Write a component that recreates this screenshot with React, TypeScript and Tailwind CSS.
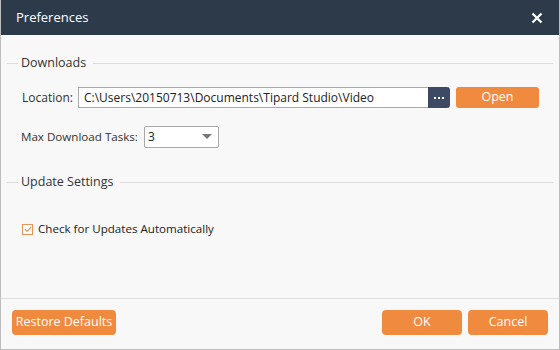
import React from "react";

function Section({ title }: { title: string }) {
  return (
    <div className="flex items-center h-[16px] pl-[6px] pr-[6px]">
      <div className="w-[11px] h-px bg-[#dcdcdc]" />
      <span className="ml-[3px] mr-[7px] text-[12.5px] text-[#333] leading-[16px]">{title}</span>
      <div className="flex-1 h-px bg-[#dcdcdc]" />
    </div>
  );
}

export default function App() {
  return (
    <div
      className="w-[560px] h-[350px] flex flex-col bg-[#f8f8f8] border-x border-b border-[#bdbdbd]"
      style={{ fontFamily: '"Open Sans", "Liberation Sans", Arial, sans-serif' }}
    >
      <div className="h-[35px] bg-[#2c3a4a] flex items-center justify-between pl-[15px] pr-[16px] shrink-0">
        <span className="text-white text-[13px]">Preferences</span>
        <svg width="12" height="12" viewBox="0 0 12 12">
          <path d="M1.5 1.5 L10.5 10.5 M10.5 1.5 L1.5 10.5" stroke="#fff" strokeWidth="2.2" />
        </svg>
      </div>
      <div className="flex-1 flex flex-col">
        <div className="mt-[20px]">
          <Section title="Downloads" />
        </div>
        <div className="mt-[16px] flex items-center h-[21px] pl-[21px]">
          <span className="text-[12px] text-[#333] w-[56px]">Location:</span>
          <div className="w-[350px] h-[21px] bg-white border border-[#a9a9a9] border-r-0 flex items-center pl-[5px] text-[12px] text-[#222]">
            C:\Users\20150713\Documents\Tipard Studio\Video
          </div>
          <div className="w-[22px] h-[21px] bg-[#3e4a63] rounded-r-[3px] flex items-center justify-center gap-[2px]">
            <div className="w-[2px] h-[2px] bg-white" />
            <div className="w-[2px] h-[2px] bg-white" />
            <div className="w-[2px] h-[2px] bg-white" />
          </div>
          <div className="ml-[6px] w-[83px] h-[21px] bg-[#f08a3e] rounded-[3px] flex items-center justify-center text-white text-[12.5px]">
            Open
          </div>
        </div>
        <div className="mt-[18px] flex items-center h-[22px] pl-[20px]">
          <span className="text-[11.6px] text-[#333] w-[123px]">Max Download Tasks:</span>
          <div className="w-[75px] h-[22px] bg-white border border-[#a9a9a9] rounded-[2px] flex items-center justify-between pl-[3px] pr-[6px] text-[12px] text-[#222]">
            <span>3</span>
            <svg width="10" height="6" viewBox="0 0 10 6">
              <path d="M0 0 L10 0 L5 5 Z" fill="#777" />
            </svg>
          </div>
        </div>
        <div className="mt-[26px]">
          <Section title="Update Settings" />
        </div>
        <div className="mt-[32px] flex items-center pl-[21px] h-[14px]">
          <div className="w-[11px] h-[11px] border border-[#e8935a] bg-white flex items-center justify-center">
            <svg width="8" height="7" viewBox="0 0 8 7">
              <path d="M0.8 3.2 L3 5.5 L7.2 1" stroke="#e8935a" strokeWidth="1.1" fill="none" />
            </svg>
          </div>
          <span className="ml-[5px] text-[11.6px] text-[#222]">Check for Updates Automatically</span>
        </div>
      </div>
      <div className="h-[51px] border-t border-[#dedede] flex items-start pt-[11px] px-[11px] shrink-0">
        <div className="w-[104px] h-[25px] bg-[#f08a3e] rounded-[4px] flex items-center justify-center text-white text-[12.5px]">
          Restore Defaults
        </div>
        <div className="flex-1" />
        <div className="w-[80px] h-[25px] bg-[#f08a3e] rounded-[4px] flex items-center justify-center text-white text-[12.5px]">
          OK
        </div>
        <div className="ml-[6px] w-[80px] h-[25px] bg-[#f08a3e] rounded-[4px] flex items-center justify-center text-white text-[12.5px]">
          Cancel
        </div>
      </div>
    </div>
  );
}
